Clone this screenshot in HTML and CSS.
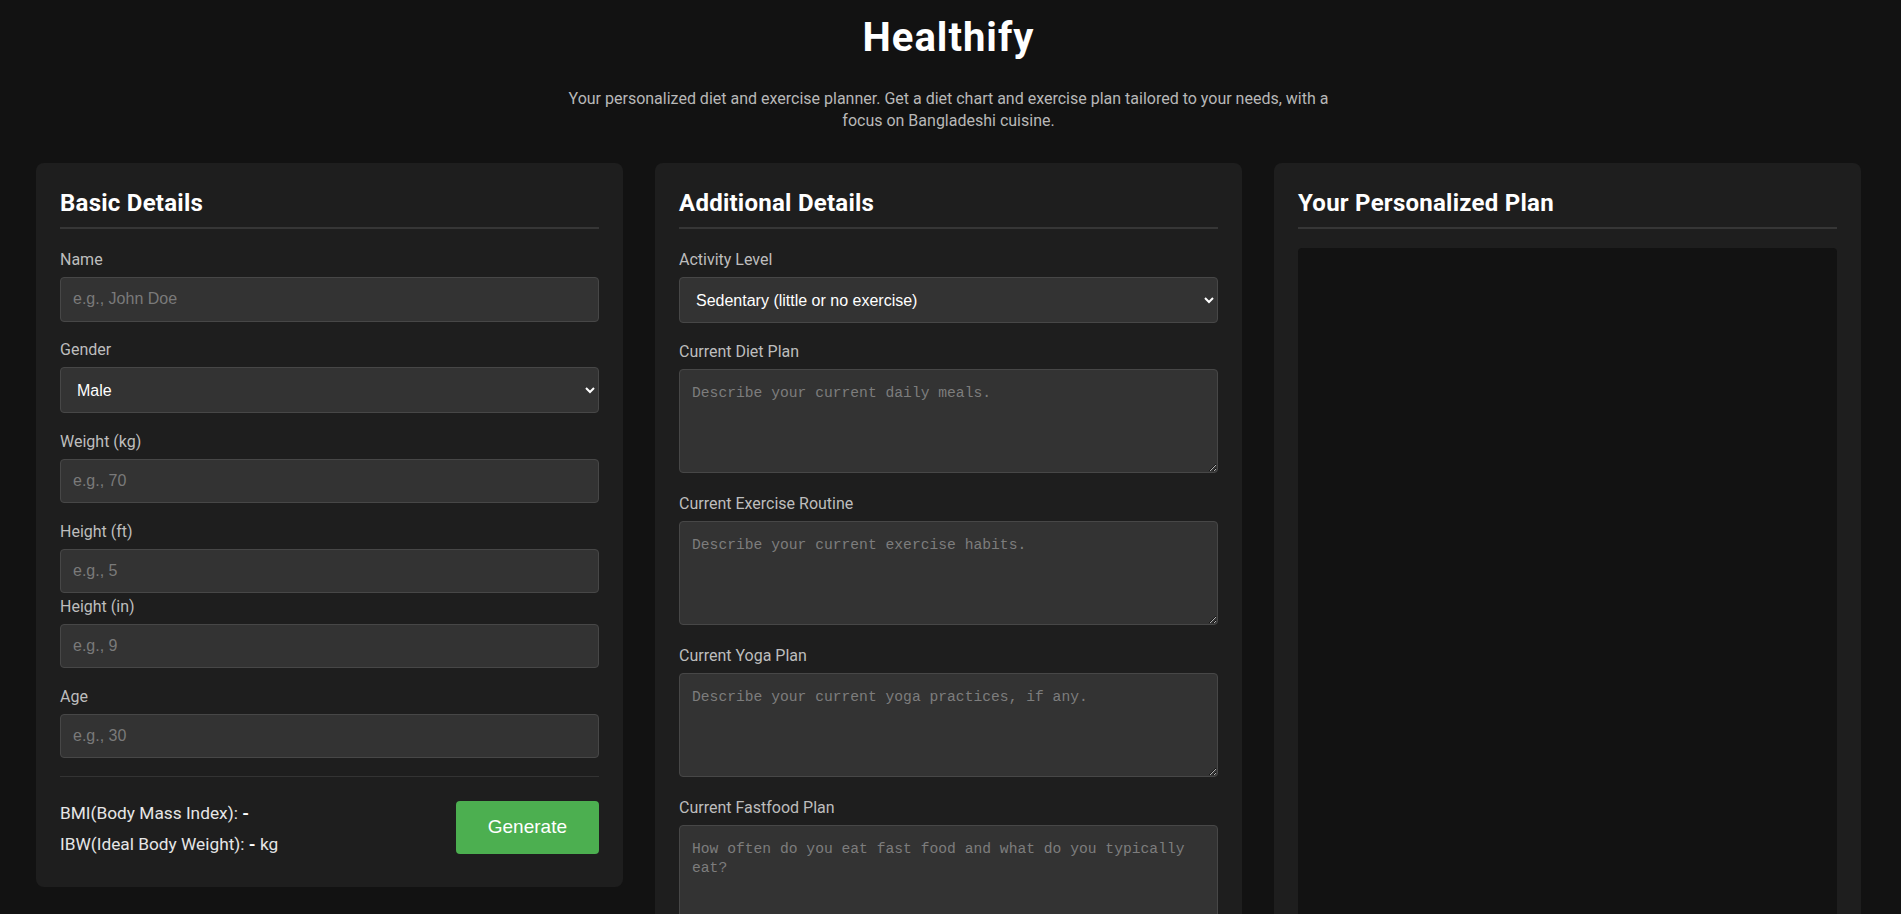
FILE: index.html
```html
<!DOCTYPE html>
<html lang="en">
<head>
<meta charset="utf-8">
<title>Healthify</title>
<link rel="stylesheet" href="styles.css">
</head>
<body>
<header class="site-header">
  <h1 class="site-title">Healthify</h1>
  <p class="site-subtitle">Your personalized diet and exercise planner. Get a diet chart and exercise plan tailored to your needs, with a focus on Bangladeshi cuisine.</p>
</header>

<main class="layout">
  <section class="card">
    <h2 class="card-title">Basic Details</h2>
    <div class="field">
      <label class="field-label" for="name">Name</label>
      <input class="control" id="name" type="text" placeholder="e.g., John Doe">
    </div>
    <div class="field">
      <label class="field-label" for="gender">Gender</label>
      <select class="control select" id="gender">
        <option>Male</option>
        <option>Female</option>
      </select>
    </div>
    <div class="field">
      <label class="field-label" for="weight">Weight (kg)</label>
      <input class="control" id="weight" type="number" placeholder="e.g., 70">
    </div>
    <div class="field">
      <label class="field-label" for="hft">Height (ft)</label>
      <input class="control" id="hft" type="number" placeholder="e.g., 5">
      <label class="field-label sub-label" for="hin">Height (in)</label>
      <input class="control" id="hin" type="number" placeholder="e.g., 9">
    </div>
    <div class="field field-last">
      <label class="field-label" for="age">Age</label>
      <input class="control" id="age" type="number" placeholder="e.g., 30">
    </div>
    <div class="stats">
      <div class="stats-text">
        <p class="stat">BMI(Body Mass Index): <span class="stat-value">-</span></p>
        <p class="stat">IBW(Ideal Body Weight): <span class="stat-value">-</span> kg</p>
      </div>
      <button class="btn-generate" type="button">Generate</button>
    </div>
  </section>

  <section class="card">
    <h2 class="card-title">Additional Details</h2>
    <div class="field">
      <label class="field-label" for="activity">Activity Level</label>
      <select class="control select" id="activity">
        <option>Sedentary (little or no exercise)</option>
        <option>Lightly active (light exercise 1-3 days/week)</option>
        <option>Moderately active (moderate exercise 3-5 days/week)</option>
        <option>Very active (hard exercise 6-7 days/week)</option>
      </select>
    </div>
    <div class="field field-area">
      <label class="field-label" for="diet">Current Diet Plan</label>
      <textarea class="control area" id="diet" placeholder="Describe your current daily meals."></textarea>
    </div>
    <div class="field field-area">
      <label class="field-label" for="exercise">Current Exercise Routine</label>
      <textarea class="control area" id="exercise" placeholder="Describe your current exercise habits."></textarea>
    </div>
    <div class="field field-area">
      <label class="field-label" for="yoga">Current Yoga Plan</label>
      <textarea class="control area" id="yoga" placeholder="Describe your current yoga practices, if any."></textarea>
    </div>
    <div class="field field-area field-end">
      <label class="field-label" for="fastfood">Current Fastfood Plan</label>
      <textarea class="control area" id="fastfood" placeholder="How often do you eat fast food and what do you typically eat?"></textarea>
    </div>
  </section>

  <section class="card">
    <h2 class="card-title plan-title">Your Personalized Plan</h2>
    <div class="plan-output"></div>
  </section>
</main>
</body>
</html>
```
FILE: styles.css
```css
html {
  scrollbar-width: none;
}
html::-webkit-scrollbar {
  display: none;
}

body {
  margin: 0;
  padding: 0 40px 40px 36px;
  background: #121212;
  color: #e0e0e0;
  font-family: Roboto, "Noto Sans", sans-serif;
  font-size: 16px;
}

.site-header {
  text-align: center;
  padding-top: 14px;
}

.site-title {
  margin: 0 0 27px;
  font-size: 40px;
  line-height: 47px;
  font-weight: 700;
  letter-spacing: 1px;
  color: #ffffff;
}

.site-subtitle {
  max-width: 780px;
  margin: 0 auto 31px;
  font-size: 16px;
  line-height: 22px;
  color: #b8b8b8;
}

.layout {
  display: grid;
  grid-template-columns: repeat(3, 1fr);
  gap: 32px;
  align-items: start;
}

.card {
  background: #1e1e1e;
  border-radius: 8px;
  padding: 24px;
}

.card-title {
  margin: 0 0 21.3px;
  padding-bottom: 7px;
  border-bottom: 2px solid #363636;
  font-size: 24px;
  line-height: 33px;
  font-weight: 700;
  letter-spacing: 0.25px;
  color: #ffffff;
}

.plan-title {
  margin-bottom: 19px;
}

.field {
  margin-bottom: 18.6px;
}

.field-area {
  margin-bottom: 21px;
}

.field-last {
  margin-bottom: 17.6px;
}

.field-end {
  margin-bottom: 0;
}

.field-label {
  display: block;
  margin-bottom: 7px;
  font-size: 16px;
  line-height: 20px;
  color: #bdbdbd;
}

.sub-label {
  margin-top: 3.7px;
}

.control {
  display: block;
  box-sizing: border-box;
  width: 100%;
  height: 44.4px;
  margin: 0;
  padding: 0 12px;
  background: #333333;
  border: 1px solid #474747;
  border-radius: 4px;
  color: #ffffff;
  font-family: "Liberation Sans", Arial, sans-serif;
  font-size: 16px;
}

.control::placeholder {
  color: #7a7a7a;
}

.select {
  height: 46px;
  color-scheme: dark;
}

.area {
  height: 104px;
  padding: 14px 12px 10px;
  resize: vertical;
  font-family: "Liberation Mono", "DejaVu Sans Mono", monospace;
  font-size: 14.67px;
  line-height: 19px;
  color-scheme: dark;
}

.area::placeholder {
  color: #7d7d7d;
}

.stats {
  display: flex;
  justify-content: space-between;
  align-items: flex-start;
  border-top: 1px solid #333333;
  padding-top: 24px;
}

.stat {
  margin: 0 0 6px;
  font-size: 17.3px;
  line-height: 25px;
  color: #e6e6e6;
}

.stat-value {
  font-weight: 700;
  color: #ffffff;
}

.btn-generate {
  height: 53px;
  padding: 0 32px;
  background: #4caf50;
  border: none;
  border-radius: 4px;
  color: #ffffff;
  font-family: "Liberation Sans", Arial, sans-serif;
  font-size: 19px;
  cursor: pointer;
}

.plan-output {
  background: #121212;
  border-radius: 4px;
  min-height: 720px;
}
```
